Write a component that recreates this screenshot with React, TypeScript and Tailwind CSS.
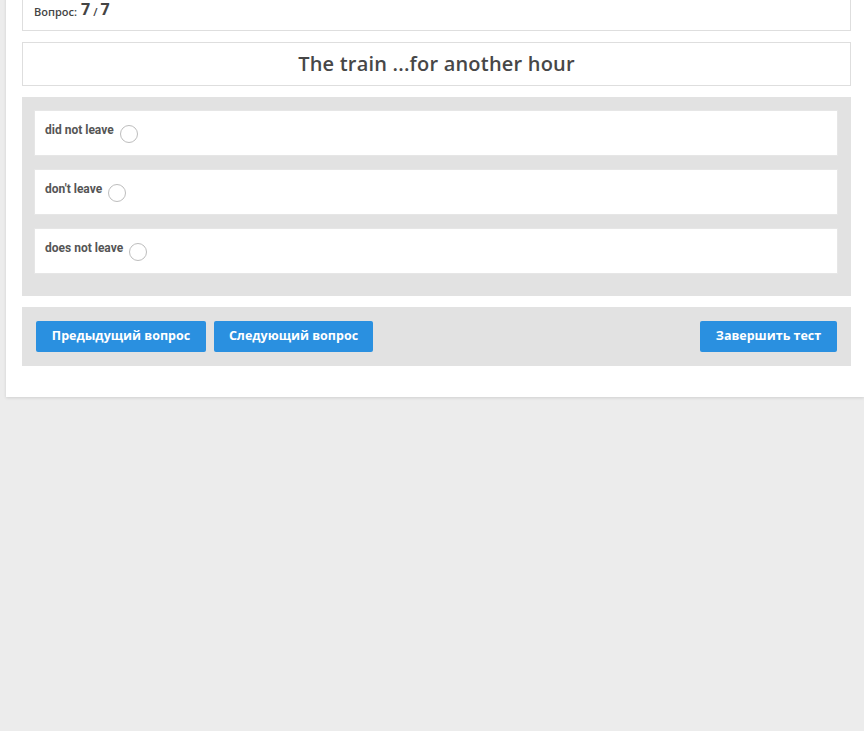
import React from "react";

const answers = ["did not leave", "don't leave", "does not leave"];

export default function App() {
  return (
    <div className="min-h-[731px] w-full overflow-hidden bg-[#ececec]" style={{ fontFamily: "'Open Sans', 'Noto Sans', sans-serif" }}>
      <div className="ml-[6px] bg-white pl-4 pr-[13px] pb-[31px] shadow-[0_1px_3px_rgba(0,0,0,0.12)]">
        {/* question counter */}
        <div className="-mt-[20px] flex h-[51px] items-end border border-[#dedede] bg-white px-[11px] pb-[13px]">
          <span className="text-[11px] font-semibold leading-none text-[#444]">Вопрос:</span>
          <span className="ml-1 text-[16px] font-bold leading-none text-[#444]">7</span>
          <span className="mx-[3px] text-[11px] font-semibold leading-none text-[#444]">/</span>
          <span className="text-[16px] font-bold leading-none text-[#444]">7</span>
        </div>

        {/* question text */}
        <div className="mt-[11px] flex h-[44px] items-center justify-center border border-[#dedede] bg-white">
          <h1 className="text-[20px] font-semibold tracking-[0.2px] text-[#474747]">The train ...for another hour</h1>
        </div>

        {/* answers */}
        <div className="mt-[11px] flex flex-col gap-[13px] bg-[#e2e2e2] pb-[22px] pl-3 pr-[13px] pt-[13px]">
          {answers.map((a) => (
            <label key={a} className="flex h-[46px] items-start border border-[#e6e6e6] bg-white pl-[10px] pt-[10px]">
              <span className="text-[12px] font-bold text-[#555]" style={{ fontFamily: "Roboto, sans-serif" }}>{a}</span>
              <span className="ml-[6px] mt-[4px] h-[18px] w-[18px] rounded-full border border-[#bdbdbd] bg-white" />
            </label>
          ))}
        </div>

        {/* navigation */}
        <div className="mt-[11px] flex h-[59px] items-center justify-between bg-[#e2e2e2] px-[14px]">
          <div className="flex gap-2">
            <button className="h-[31px] w-[170px] rounded-[2px] bg-[#2a90e0] text-[12.5px] font-bold text-white">Предыдущий вопрос</button>
            <button className="h-[31px] w-[159px] rounded-[2px] bg-[#2a90e0] text-[12.5px] font-bold text-white">Следующий вопрос</button>
          </div>
          <button className="h-[31px] w-[137px] rounded-[2px] bg-[#2a90e0] text-[12.5px] font-bold text-white">Завершить тест</button>
        </div>
      </div>
    </div>
  );
}
